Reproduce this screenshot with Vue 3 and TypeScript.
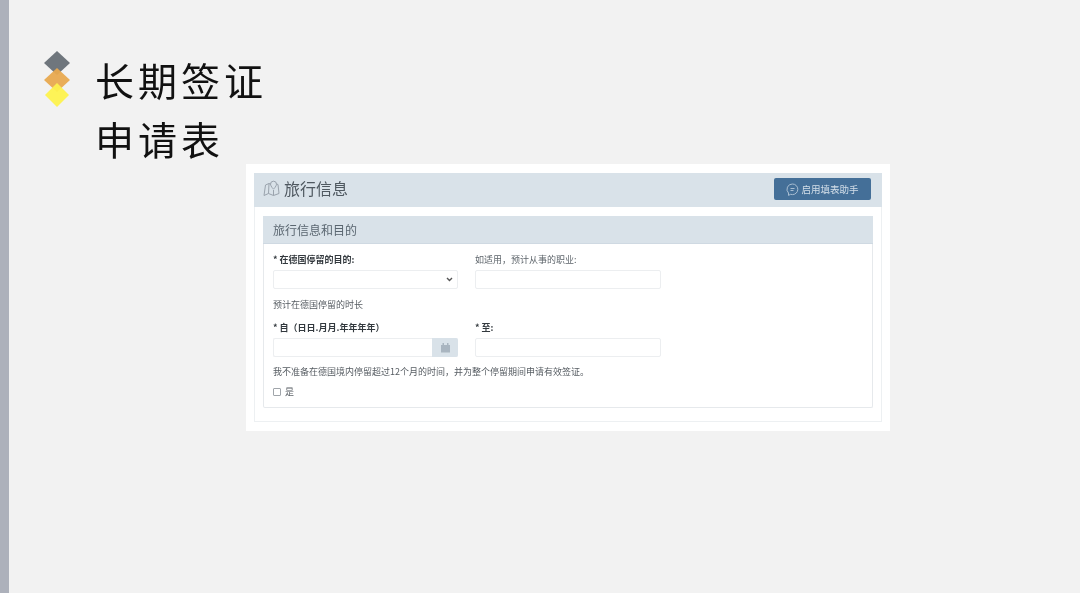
<script setup lang="ts">
const title: string[] = ['长期签证', '申请表']
</script>

<template>
  <div class="slide">
    <div class="bar"></div>
    <main class="content">
      <header class="head">
        <svg class="mark" width="28" height="58" viewBox="0 0 28 58" aria-hidden="true">
          <polygon points="14,1 27,13 14,25 1,13" fill="#6f767d" />
          <polygon points="14,18 27,30 14,42 1,30" fill="#e8a94f" fill-opacity=".95" />
          <polygon points="14,33 26,45 14,57 2,45" fill="#fdf24e" fill-opacity=".95" />
        </svg>
        <h1 class="title">
          <span v-for="line in title" :key="line" class="title-line">{{ line }}</span>
        </h1>
      </header>

      <section class="shot">
        <div class="panel">
          <div class="panel-head">
            <div class="panel-title">
              <svg class="map" width="17" height="17" viewBox="0 0 17 17" fill="none" stroke="#9aa3ad" stroke-width="1" aria-hidden="true">
                <path d="M1 15.500 2.500 5 6 3.500 8 4.300M1 15.500l4.500-2 5 2 5.500-2L15 4.500l-1.600-.6M5.500 13.500 6 3.500M10.500 15.500V10" />
                <path d="M10.500 1.200a3 3 0 0 0-3 3c0 2 3 5 3 5s3-3 3-5a3 3 0 0 0-3-3Z" />
              </svg>
              <span>旅行信息</span>
            </div>
            <button class="helper" type="button">
              <svg width="13" height="13" viewBox="0 0 13 13" fill="none" stroke="#a9bed2" stroke-width="1" aria-hidden="true">
                <path d="M6.500 1a5.300 5.300 0 0 1 0 10.600c-.7 0-1.300-.1-1.900-.3L2.500 12.400V10A5.300 5.300 0 0 1 6.500 1Z" />
                <path d="M4.500 5.500h4M4.500 7.500h3" />
              </svg>
              <span>启用填表助手</span>
            </button>
          </div>

          <div class="inner">
            <div class="inner-head">旅行信息和目的</div>
            <div class="inner-body">
              <div class="row">
                <div class="field">
                  <label class="label strong">* 在德国停留的目的:</label>
                  <div class="input select">
                    <svg width="7" height="5" viewBox="0 0 7 5" fill="none" stroke="#555" stroke-width="1.400" aria-hidden="true"><path d="M1 1l2.500 2.500L6 1" /></svg>
                  </div>
                </div>
                <div class="field wide">
                  <label class="label">如适用&#xFF0C;预计从事的职业:</label>
                  <div class="input"></div>
                </div>
              </div>

              <p class="note duration">预计在德国停留的时长</p>

              <div class="row dates">
                <div class="field">
                  <label class="label strong">* 自&#xFF08;日日.月月.年年年年&#xFF09;</label>
                  <div class="input date">
                    <span class="cal">
                      <svg width="11" height="11" viewBox="0 0 11 11" fill="#a9b5c0" aria-hidden="true">
                        <path d="M1 3h9v7.500H1zM2.500 1h1.500v2H2.500zM7 1h1.500v2H7z" />
                      </svg>
                    </span>
                  </div>
                </div>
                <div class="field wide">
                  <label class="label strong">* 至:</label>
                  <div class="input"></div>
                </div>
              </div>

              <p class="note statement">我不准备在德国境内停留超过12个月的时间&#xFF0C;并为整个停留期间申请有效签证。</p>
              <div class="check"><span class="box"></span><span>是</span></div>
            </div>
          </div>
        </div>
      </section>
    </main>
  </div>
</template>

<style scoped>
.slide {
  display: flex;
  width: 1080px;
  height: 593px;
  overflow: hidden;
  background: #f2f2f2;
  font-family: "Noto Sans CJK SC", "Noto Sans", sans-serif;
}
.bar {
  flex: none;
  width: 9px;
  background: #adb1bb;
}
.content {
  flex: 1;
  display: flex;
  flex-direction: column;
  min-width: 0;
}
.head {
  display: flex;
  align-items: flex-start;
  height: 164px;
  padding: 50px 0 0 34px;
  box-sizing: border-box;
}
.mark {
  flex: none;
  filter: blur(.6px);
}
.title {
  margin: 0 0 0 24px;
  font-size: 39px;
  font-weight: 400;
  line-height: 59px;
  letter-spacing: 4px;
  color: #111;
  filter: blur(.3px);
}
.title-line {
  display: block;
}
.shot {
  width: 644px;
  height: 267px;
  margin-left: 237px;
  padding: 9px 8px;
  box-sizing: border-box;
  background: #fff;
  filter: blur(.55px);
}
.panel {
  height: 249px;
  box-sizing: border-box;
  border: 1px solid #edf0f2;
  border-top: 0;
}
.panel-head {
  display: flex;
  align-items: center;
  justify-content: space-between;
  height: 34px;
  margin: 0 -1px;
  padding: 0 11px 0 9px;
  background: #d9e2e9;
}
.panel-title {
  display: flex;
  align-items: center;
  gap: 4px;
  margin-top: -4px;
  font-size: 16px;
  color: #4f5860;
}
.helper {
  display: flex;
  align-items: center;
  justify-content: center;
  gap: 2px;
  width: 97px;
  height: 22px;
  margin-top: -2px;
  padding: 0;
  border: 0;
  border-radius: 2px;
  background: #446f98;
  color: #d4dfe9;
  font: inherit;
  font-size: 9.500px;
}
.inner {
  height: 192px;
  box-sizing: border-box;
  margin: 9px 8px 0 8px;
  border: 1px solid #e6e9ec;
  border-top: 0;
  border-radius: 2px;
  background: #fff;
}
.inner-head {
  height: 28px;
  margin: 0 -1px;
  padding-left: 10px;
  box-sizing: border-box;
  background: #d9e2e9;
  border-bottom: 1px solid #cfd9e2;
  font-size: 12px;
  line-height: 28px;
  color: #5a6670;
}
.inner-body {
  padding: 9px 9px 0;
}
.row {
  display: flex;
  gap: 17px;
}
.field {
  width: 185px;
}
.wide {
  width: 186px;
}
.label {
  display: block;
  height: 17px;
  font-size: 9px;
  line-height: 13px;
  color: #5f666c;
}
.strong {
  font-weight: 700;
  color: #33393e;
}
.input {
  display: flex;
  align-items: center;
  justify-content: flex-end;
  height: 19px;
  box-sizing: border-box;
  border: 1px solid #eceef0;
  border-radius: 2px;
  background: #fff;
}
.select {
  padding-right: 4px;
}
.date {
  border-right: 0;
}
.cal {
  display: flex;
  align-items: center;
  justify-content: center;
  width: 26px;
  height: 19px;
  border-radius: 0 2px 2px 0;
  background: #d9e2e9;
}
.note {
  margin: 0;
  font-size: 9px;
  line-height: 13px;
  color: #565c62;
}
.duration {
  margin-top: 9px;
}
.dates {
  margin-top: 10px;
}
.statement {
  margin-top: 8px;
}
.check {
  display: flex;
  align-items: center;
  gap: 4px;
  margin-top: 7px;
  font-size: 9px;
  line-height: 13px;
  color: #565c62;
}
.box {
  width: 6px;
  height: 6px;
  border: 1px solid #a0a5aa;
  border-radius: 1px;
}
</style>

<style>
html, body { margin: 0; background: #f2f2f2; }
</style>
